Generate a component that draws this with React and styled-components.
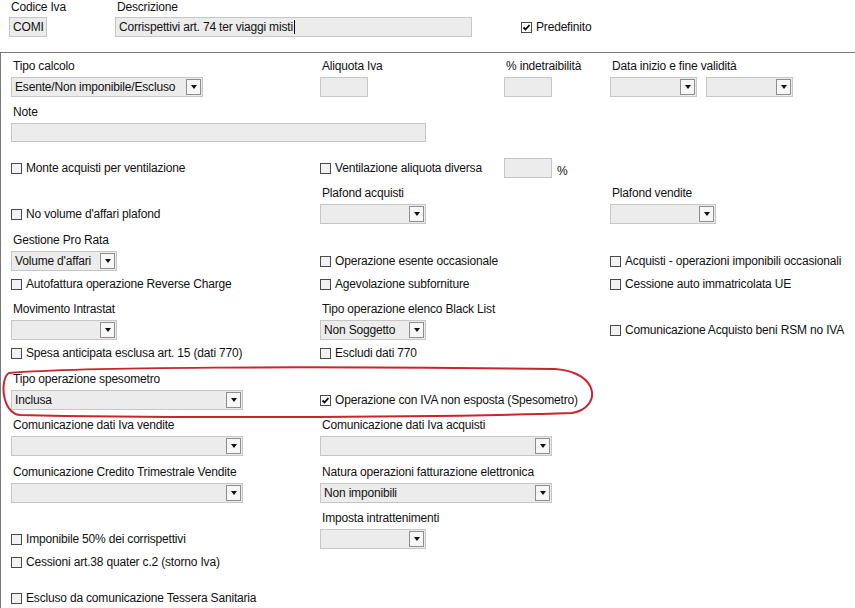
import React from "react";
import styled, { createGlobalStyle } from "styled-components";

const GlobalStyle = createGlobalStyle`
  html, body {
    margin: 0;
    padding: 0;
    background: #ffffff;
  }
  body {
    font-family: "Liberation Sans", Arial, sans-serif;
    font-size: 12px;
    letter-spacing: -0.18px;
    color: #111111;
  }
`;

const Page = styled.div`
  position: relative;
  width: 855px;
  height: 608px;
  overflow: hidden;
`;

const Header = styled.div`
  display: flex;
  align-items: flex-start;
  height: 52px;
  padding-left: 9px;
`;

const HeaderSlot = styled.div`
  width: ${(p) => p.$w}px;
  margin-left: ${(p) => p.$ml || 0}px;
  margin-top: ${(p) => p.$mt || 0}px;
  height: ${(p) => (p.$h ? `${p.$h}px` : "auto")};
  display: flex;
  flex-direction: column;
  justify-content: ${(p) => (p.$h ? "center" : "flex-start")};
`;

const Panel = styled.div`
  border-top: 1px solid #7a7a7a;
  border-left: 1px solid #7a7a7a;
  padding-left: 10px;
  height: 600px;
`;

const Row = styled.div`
  display: grid;
  grid-template-columns: 309px 184px 106px 1fr;
  align-items: start;
  margin-top: ${(p) => p.$mt || 0}px;
  height: ${(p) => (p.$h ? `${p.$h}px` : "auto")};
`;

const Cell = styled.div`
  grid-column: ${(p) => p.$col || 1};
  align-self: ${(p) => p.$align || "start"};
  display: flex;
  align-items: center;
  height: ${(p) => (p.$h ? `${p.$h}px` : "auto")};
`;

const Field = styled.div`
  display: flex;
  flex-direction: column;
`;

const Label = styled.div`
  box-sizing: border-box;
  height: 14px;
  line-height: 13px;
  padding: 1px 0 0 2px;
  margin-bottom: ${(p) => (p.$mb === undefined ? 4 : p.$mb)}px;
  white-space: nowrap;
`;

const TextBox = styled.div`
  box-sizing: border-box;
  width: ${(p) => p.$w}px;
  height: ${(p) => p.$h || 20}px;
  background: #ececec;
  border: 1px solid #c6c6c6;
  padding: 0 3px;
  display: flex;
  align-items: center;
  white-space: nowrap;
`;

const Caret = styled.span`
  display: inline-block;
  width: 1px;
  height: 14px;
  background: #000;
  margin-left: 1px;
`;

const SelectBox = styled.div`
  box-sizing: border-box;
  width: ${(p) => p.$w}px;
  height: 20px;
  background: #ececec;
  border: 1px solid #c6c6c6;
  padding: 0 1px 0 3px;
  display: flex;
  align-items: center;
`;

const SelectValue = styled.span`
  flex: 1;
  white-space: nowrap;
  overflow: hidden;
`;

const ArrowButton = styled.span`
  box-sizing: border-box;
  width: 15px;
  height: 16px;
  border: 1px solid #8e8e8e;
  background: #f7f7f7;
  display: flex;
  align-items: center;
  justify-content: center;

  &::after {
    content: "";
    width: 0;
    height: 0;
    border-left: 3.5px solid transparent;
    border-right: 3.5px solid transparent;
    border-top: 4px solid #111;
  }
`;

const CheckRow = styled.label`
  display: flex;
  align-items: center;
  gap: 4px;
  height: 14px;
  white-space: nowrap;
`;

const Box = styled.span`
  box-sizing: border-box;
  width: 11px;
  height: 11px;
  border: 1px solid #4a4a4a;
  background: ${(p) => (p.$checked ? "#ffffff" : "#f2f2f2")};
  display: flex;
  align-items: center;
  justify-content: center;
`;

const Percent = styled.span`
  margin-left: 5px;
  padding-top: 6px;
`;

const DateGroup = styled.div`
  display: flex;
  gap: 9px;
`;

const Highlight = styled.svg`
  position: absolute;
  left: 0;
  top: 360px;
  pointer-events: none;
`;

function Select({ w, value }) {
  return (
    <SelectBox $w={w}>
      <SelectValue>{value}</SelectValue>
      <ArrowButton />
    </SelectBox>
  );
}

function Check({ children, checked }) {
  return (
    <CheckRow>
      <Box $checked={checked}>
        {checked && (
          <svg width="9" height="9" viewBox="0 0 9 9">
            <path d="M1.5 4.5 L3.5 6.5 L7.5 2" fill="none" stroke="#000" strokeWidth="1.8" />
          </svg>
        )}
      </Box>
      <span>{children}</span>
    </CheckRow>
  );
}

function SelectField({ label, w, value }) {
  return (
    <Field>
      <Label>{label}</Label>
      <Select w={w} value={value} />
    </Field>
  );
}

export default function App() {
  return (
    <Page>
      <GlobalStyle />
      <Header>
        <HeaderSlot $w={38}>
          <Label $mb={3}>Codice Iva</Label>
          <TextBox $w={38}>COMI</TextBox>
        </HeaderSlot>
        <HeaderSlot $w={357} $ml={68}>
          <Label $mb={3}>Descrizione</Label>
          <TextBox $w={357}>
            Corrispettivi art. 74 ter viaggi misti
            <Caret />
          </TextBox>
        </HeaderSlot>
        <HeaderSlot $w={120} $ml={49} $mt={17} $h={20}>
          <Check checked>Predefinito</Check>
        </HeaderSlot>
      </Header>

      <Panel>
        <Row $mt={6}>
          <Cell $col={1}>
            <SelectField label="Tipo calcolo" w={192} value="Esente/Non imponibile/Escluso" />
          </Cell>
          <Cell $col={2}>
            <Field>
              <Label>Aliquota Iva</Label>
              <TextBox $w={48} />
            </Field>
          </Cell>
          <Cell $col={3}>
            <Field>
              <Label>% indetraibilità</Label>
              <TextBox $w={48} />
            </Field>
          </Cell>
          <Cell $col={4}>
            <Field>
              <Label>Data inizio e fine validità</Label>
              <DateGroup>
                <Select w={87} />
                <Select w={87} />
              </DateGroup>
            </Field>
          </Cell>
        </Row>

        <Row $mt={8}>
          <Cell $col="1 / 3">
            <Field>
              <Label>Note</Label>
              <TextBox $w={415} $h={19} />
            </Field>
          </Cell>
        </Row>

        <Row $mt={16} $h={20}>
          <Cell $col={1} $h={20}>
            <Check>Monte acquisti per ventilazione</Check>
          </Cell>
          <Cell $col={2} $h={20}>
            <Check>Ventilazione aliquota diversa</Check>
          </Cell>
          <Cell $col={3} $h={20}>
            <TextBox $w={48} />
            <Percent>%</Percent>
          </Cell>
        </Row>

        <Row $mt={8}>
          <Cell $col={1} $align="end" $h={20}>
            <Check>No volume d'affari plafond</Check>
          </Cell>
          <Cell $col={2}>
            <SelectField label="Plafond acquisti" w={106} />
          </Cell>
          <Cell $col={4}>
            <SelectField label="Plafond vendite" w={106} />
          </Cell>
        </Row>

        <Row $mt={9}>
          <Cell $col={1}>
            <SelectField label="Gestione Pro Rata" w={106} value="Volume d'affari" />
          </Cell>
          <Cell $col={2} $align="end" $h={20}>
            <Check>Operazione esente occasionale</Check>
          </Cell>
          <Cell $col={4} $align="end" $h={20}>
            <Check>Acquisti - operazioni imponibili occasionali</Check>
          </Cell>
        </Row>

        <Row $mt={6}>
          <Cell $col={1}>
            <Check>Autofattura operazione Reverse Charge</Check>
          </Cell>
          <Cell $col={2}>
            <Check>Agevolazione subforniture</Check>
          </Cell>
          <Cell $col={4}>
            <Check>Cessione auto immatricolata UE</Check>
          </Cell>
        </Row>

        <Row $mt={11}>
          <Cell $col={1}>
            <SelectField label="Movimento Intrastat" w={106} />
          </Cell>
          <Cell $col={2}>
            <SelectField label="Tipo operazione elenco Black List" w={106} value="Non Soggetto" />
          </Cell>
          <Cell $col={4} $align="end" $h={20}>
            <Check>Comunicazione Acquisto beni RSM no IVA</Check>
          </Cell>
        </Row>

        <Row $mt={6}>
          <Cell $col={1}>
            <Check>Spesa anticipata esclusa art. 15 (dati 770)</Check>
          </Cell>
          <Cell $col={2}>
            <Check>Escludi dati 770</Check>
          </Cell>
        </Row>

        <Row $mt={12}>
          <Cell $col={1}>
            <SelectField label="Tipo operazione spesometro" w={232} value="Inclusa" />
          </Cell>
          <Cell $col="2 / 5" $align="end" $h={20}>
            <Check checked>Operazione con IVA non esposta (Spesometro)</Check>
          </Cell>
        </Row>

        <Row $mt={8}>
          <Cell $col={1}>
            <SelectField label="Comunicazione dati Iva vendite" w={232} />
          </Cell>
          <Cell $col="2 / 5">
            <SelectField label="Comunicazione dati Iva acquisti" w={232} />
          </Cell>
        </Row>

        <Row $mt={9}>
          <Cell $col={1}>
            <SelectField label="Comunicazione Credito Trimestrale Vendite" w={232} />
          </Cell>
          <Cell $col="2 / 5">
            <SelectField label="Natura operazioni fatturazione elettronica" w={232} value="Non imponibili" />
          </Cell>
        </Row>

        <Row $mt={8}>
          <Cell $col={1} $align="end" $h={20}>
            <Check>Imponibile 50% dei corrispettivi</Check>
          </Cell>
          <Cell $col={2}>
            <SelectField label="Imposta intrattenimenti" w={106} />
          </Cell>
        </Row>

        <Row $mt={6}>
          <Cell $col="1 / 3">
            <Check>Cessioni art.38 quater c.2 (storno Iva)</Check>
          </Cell>
        </Row>

        <Row $mt={22}>
          <Cell $col="1 / 3">
            <Check>Escluso da comunicazione Tessera Sanitaria</Check>
          </Cell>
        </Row>
      </Panel>

      <Highlight width="610" height="64" viewBox="0 0 610 64">
        <path
          d="M 9 13 C 80 7, 300 6, 555 9 C 600 12, 602 48, 572 53 C 420 58, 140 58, 20 55 C 1 53, 0 18, 9 13 Z"
          fill="none"
          stroke="#c9252d"
          strokeWidth="2"
        />
      </Highlight>
    </Page>
  );
}
